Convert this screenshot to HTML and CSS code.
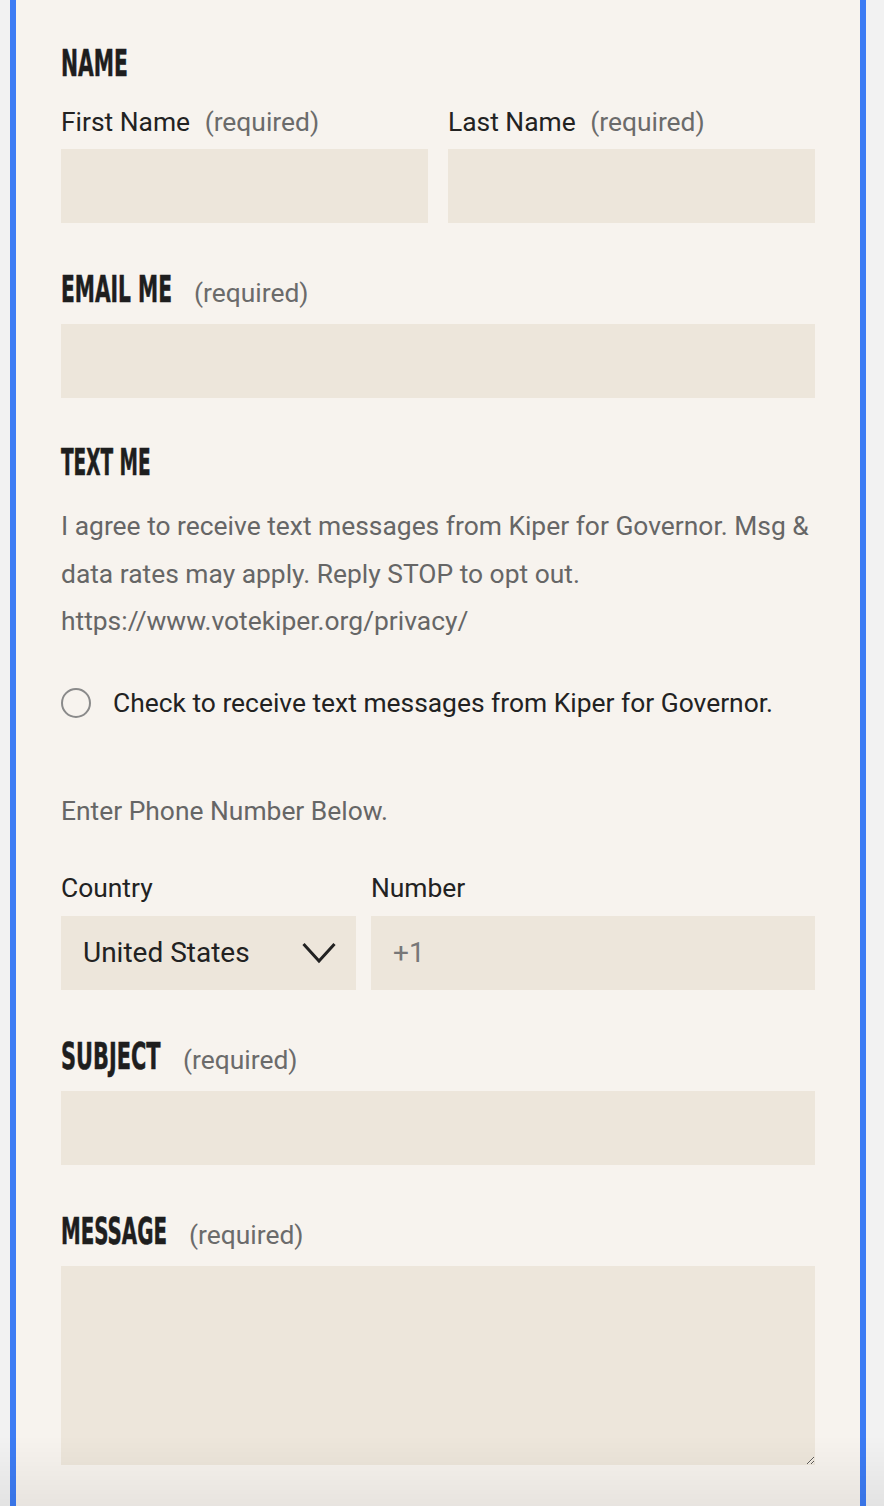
FILE: index.html
```html
<!DOCTYPE html>
<html lang="en">
<head>
<meta charset="utf-8">
<title>Contact</title>
<link rel="stylesheet" href="styles.css">
</head>
<body>
<div class="panel">
  <form class="form">
    <section class="group">
      <h2 class="heading"><span class="ht ht-name">NAME</span></h2>
      <div class="row two">
        <div class="field">
          <label class="label">First Name <span class="req">(required)</span></label>
          <input class="input" type="text">
        </div>
        <div class="field">
          <label class="label">Last Name <span class="req">(required)</span></label>
          <input class="input" type="text">
        </div>
      </div>
    </section>

    <section class="group">
      <h2 class="heading"><span class="ht ht-email">EMAIL ME</span><span class="req">(required)</span></h2>
      <input class="input" type="email">
    </section>

    <section class="group group-text">
      <h2 class="heading"><span class="ht ht-text">TEXT ME</span></h2>
      <p class="desc">I agree to receive text messages from Kiper for Governor. Msg &amp; data rates may apply. Reply STOP to opt out. https://www.votekiper.org/privacy/</p>
      <label class="check"><span class="radio"></span><span>Check to receive text messages from Kiper for Governor.</span></label>
      <p class="hint">Enter Phone Number Below.</p>
      <div class="row phone">
        <div class="field">
          <label class="label">Country</label>
          <div class="select">
            <span>United States</span>
            <svg class="chev" width="34" height="22" viewBox="0 0 34 22"><path d="M1.5 2 L17 19 L32.5 2" fill="none" stroke="#222" stroke-width="3"/></svg>
          </div>
        </div>
        <div class="field">
          <label class="label">Number</label>
          <input class="input" type="tel" placeholder="+1">
        </div>
      </div>
    </section>

    <section class="group">
      <h2 class="heading"><span class="ht ht-subject">SUBJECT</span><span class="req">(required)</span></h2>
      <input class="input" type="text">
    </section>

    <section class="group">
      <h2 class="heading"><span class="ht ht-message">MESSAGE</span><span class="req">(required)</span></h2>
      <textarea class="textarea"></textarea>
    </section>
  </form>
</div>
<div class="shade"></div>
</body>
</html>
```
FILE: styles.css
```css
html, body {
  margin: 0;
  padding: 0;
}
body {
  background: #f2f2f2;
  font-family: Roboto, "Liberation Sans", sans-serif;
  color: #222;
}
.panel {
  margin-left: 10px;
  width: 844px;
  min-height: 1506px;
  background: #f7f3ee;
  border-left: 6px solid #3d7cf4;
  border-right: 6px solid #3d7cf4;
  box-sizing: content-box;
}
.form {
  padding: 40px 45px 0 45px;
  display: flex;
  flex-direction: column;
}
.heading {
  margin: 0;
  font-family: "DejaVu Sans", sans-serif;
  font-weight: 700;
  font-size: 38px;
  line-height: 46px;
  color: #1e1e1e;
  display: flex;
  align-items: baseline;
}
.ht {
  display: inline-block;
  white-space: nowrap;
  transform-origin: 0 50%;
  -webkit-text-stroke: 0.6px #1e1e1e;
}
.ht-name { transform: scaleX(0.535); }
.ht-email { transform: scaleX(0.532); width: 109px; }
.ht-text { transform: scaleX(0.487); }
.ht-subject { transform: scaleX(0.55); width: 98px; }
.ht-message { transform: scaleX(0.521); width: 104px; }
.heading .req {
  font-family: Roboto, "Liberation Sans", sans-serif;
  font-weight: 400;
  font-size: 26.4px;
  margin-left: 24px;
}
.req {
  color: #6b6b6b;
  margin-left: 8px;
}
.group {
  display: flex;
  flex-direction: column;
}
.row {
  display: flex;
}
.row.two { gap: 20px; }
.row.two .field { flex: 1; }
.field {
  display: flex;
  flex-direction: column;
}
.label {
  font-size: 26.4px;
  line-height: 30px;
  margin: 21px 0 12px;
  color: #222;
}
.input, .textarea, .select {
  display: block;
  box-sizing: border-box;
  width: 100%;
  height: 74px;
  background: #ede6db;
  border: 0;
  margin: 0;
  padding: 0 22px;
  font-family: Roboto, "Liberation Sans", sans-serif;
  font-size: 28px;
  color: #222;
  outline: none;
}
.input::placeholder { color: #777; }
.group + .group { margin-top: 43px; }
.group-text { margin-top: 41px !important; }
.group + .group .heading + .input,
.group + .group .heading + .textarea { margin-top: 8px; }
.textarea {
  height: 199px;
  padding: 16px 22px;
  resize: vertical;
}
.desc {
  margin: 18px 0 0;
  font-size: 26.4px;
  line-height: 47.5px;
  color: #666;
}
.check {
  display: flex;
  align-items: center;
  gap: 22px;
  margin-top: 42px;
  font-size: 26.4px;
  line-height: 30px;
  color: #222;
}
.radio {
  width: 26px;
  height: 26px;
  border: 2px solid #8a8a8a;
  border-radius: 50%;
  flex: none;
}
.hint {
  margin: 78px 0 0;
  font-size: 26.4px;
  line-height: 30px;
  color: #666;
}
.phone { gap: 15px; margin-top: 47px; }
.phone .label { margin-top: 0; margin-bottom: 13px; }
.phone .field:first-child { width: 295px; flex: none; }
.phone .field:last-child { flex: 1; }
.select {
  display: flex;
  align-items: center;
  justify-content: space-between;
  padding: 0 20px 0 22px;
}
.shade {
  position: fixed;
  left: 0;
  right: 0;
  bottom: 0;
  height: 70px;
  background: linear-gradient(to bottom, rgba(0,0,0,0), rgba(0,0,0,0.06));
  pointer-events: none;
}
```
